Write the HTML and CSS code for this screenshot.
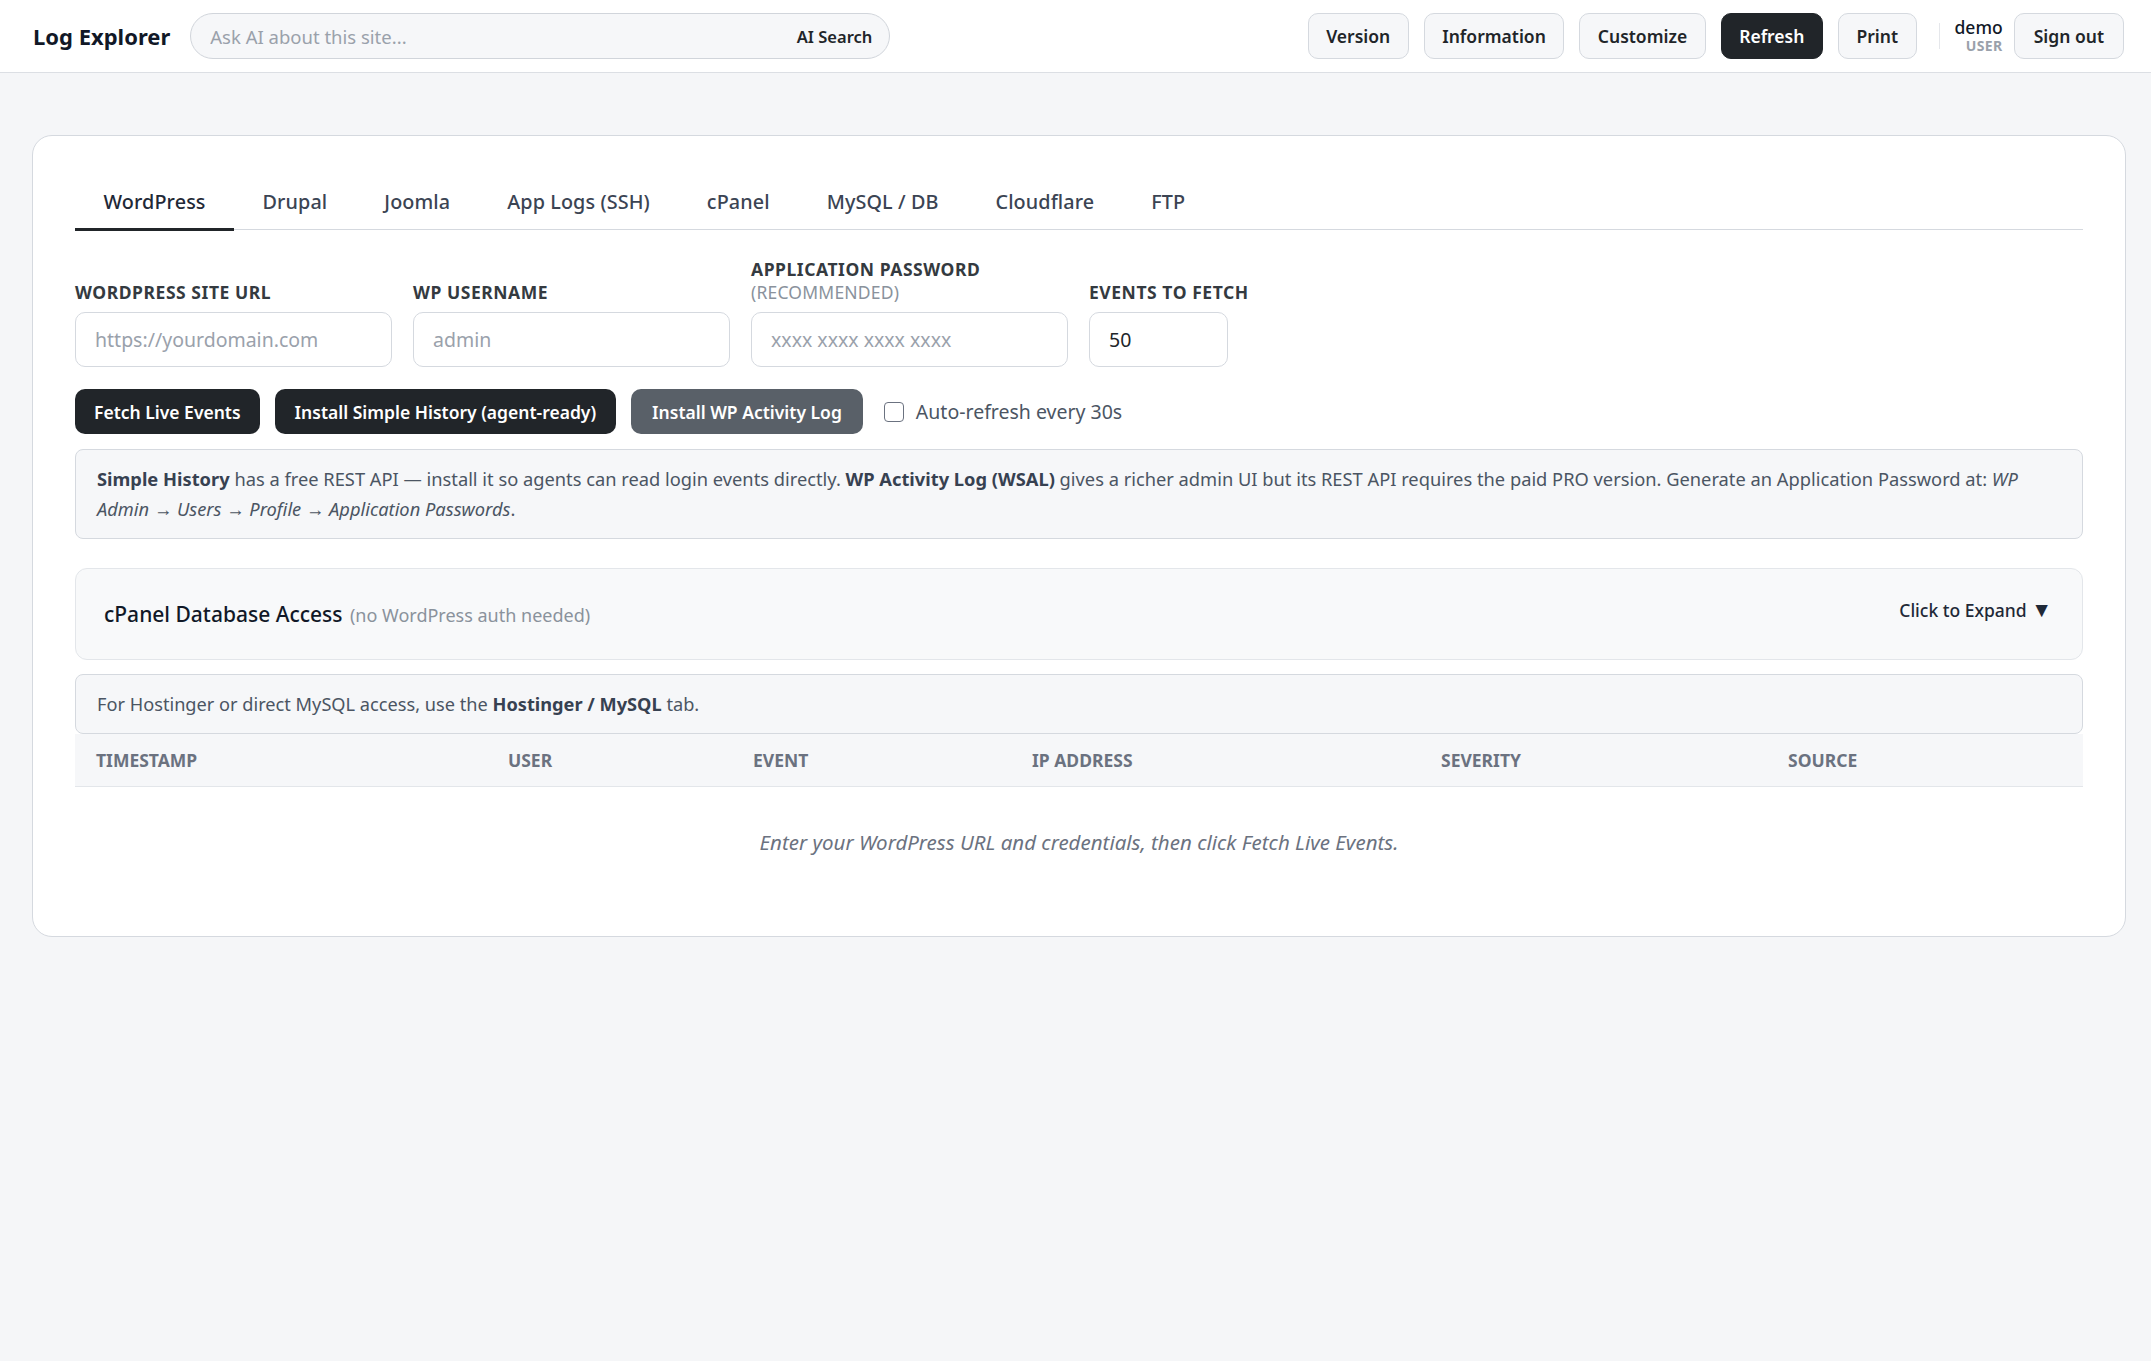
FILE: index.html
```html
<!DOCTYPE html>
<html lang="en">
<head>
<meta charset="utf-8">
<title>Log Explorer</title>
<link rel="stylesheet" href="styles.css">
</head>
<body>
<header class="topbar">
  <div class="brand">Log Explorer</div>
  <div class="search">
    <input class="search-input" type="text" placeholder="Ask AI about this site...">
    <button class="search-btn">AI Search</button>
  </div>
  <nav class="top-actions">
    <button class="btn-light">Version</button>
    <button class="btn-light">Information</button>
    <button class="btn-light">Customize</button>
    <button class="btn-dark">Refresh</button>
    <button class="btn-light">Print</button>
    <span class="divider"></span>
    <div class="user">
      <div class="user-name">demo</div>
      <div class="user-role">USER</div>
    </div>
    <button class="btn-light signout">Sign out</button>
  </nav>
</header>

<main class="main">
  <section class="card">
    <div class="tabs">
      <div class="tab active">WordPress</div>
      <div class="tab">Drupal</div>
      <div class="tab">Joomla</div>
      <div class="tab">App Logs (SSH)</div>
      <div class="tab">cPanel</div>
      <div class="tab">MySQL / DB</div>
      <div class="tab">Cloudflare</div>
      <div class="tab">FTP</div>
    </div>

    <div class="form-grid">
      <div class="field">
        <label class="label" for="wp-url">WORDPRESS SITE URL</label>
        <input class="input" id="wp-url" type="text" placeholder="https://yourdomain.com">
      </div>
      <div class="field">
        <label class="label" for="wp-user">WP USERNAME</label>
        <input class="input" id="wp-user" type="text" placeholder="admin">
      </div>
      <div class="field">
        <label class="label" for="wp-pass">APPLICATION PASSWORD <span class="label-note">(RECOMMENDED)</span></label>
        <input class="input" id="wp-pass" type="text" placeholder="xxxx xxxx xxxx xxxx">
      </div>
      <div class="field">
        <label class="label" for="wp-count">EVENTS TO FETCH</label>
        <input class="input" id="wp-count" type="text" value="50">
      </div>
    </div>

    <div class="actions">
      <button class="btn-solid">Fetch Live Events</button>
      <button class="btn-solid btn-wide">Install Simple History (agent-ready)</button>
      <button class="btn-solid btn-gray">Install WP Activity Log</button>
      <div class="check">
        <input class="checkbox" id="auto" type="checkbox">
        <label for="auto">Auto-refresh every 30s</label>
      </div>
    </div>

    <div class="note"><strong>Simple History</strong> has a free REST API — install it so agents can read login events directly. <strong>WP Activity Log (WSAL)</strong> gives a richer admin UI but its REST API requires the paid PRO version. Generate an Application Password at: <em>WP</em><br><em>Admin → Users → Profile → Application Passwords</em>.</div>

    <div class="collapse">
      <div class="collapse-title">cPanel Database Access <span class="collapse-sub">(no WordPress auth needed)</span></div>
      <div class="collapse-toggle">Click to Expand <span class="caret">▼</span></div>
    </div>

    <div class="hint">For Hostinger or direct MySQL access, use the&nbsp;<strong>Hostinger / MySQL</strong>&nbsp;tab.</div>

    <table class="log-table">
      <colgroup>
        <col class="c1"><col class="c2"><col class="c3"><col class="c4"><col class="c5"><col class="c6">
      </colgroup>
      <thead>
        <tr>
          <th>Timestamp</th>
          <th>User</th>
          <th>Event</th>
          <th>IP Address</th>
          <th>Severity</th>
          <th>Source</th>
        </tr>
      </thead>
      <tbody>
        <tr>
          <td class="empty" colspan="6">Enter your WordPress URL and credentials, then click Fetch Live Events.</td>
        </tr>
      </tbody>
    </table>
  </section>
</main>
</body>
</html>
```

FILE: styles.css
```css
* { box-sizing: border-box; }

html, body {
  margin: 0;
  padding: 0;
}

body {
  background: #f5f6f8;
  font-family: "Noto Sans", "Open Sans", sans-serif;
  color: #212529;
  font-size: 17.5px;
}

button, input {
  font-family: inherit;
}

/* Header */
.topbar {
  height: 73px;
  background: #ffffff;
  border-bottom: 1px solid #dcdfe4;
  display: flex;
  align-items: center;
  padding: 0 27px 0 33px;
}

.brand {
  font-size: 22px;
  font-weight: 700;
  color: #111827;
  margin-right: 20px;
  white-space: nowrap;
}

.search {
  width: 700px;
  height: 46px;
  border: 1px solid #d1d5db;
  border-radius: 23px;
  background: #f6f7f9;
  display: flex;
  align-items: center;
  padding: 0 17px 0 19px;
}

.search-input {
  flex: 1;
  border: 0;
  background: transparent;
  font-size: 18.5px;
  color: #212529;
  outline: none;
  padding: 0;
}

.search-input::placeholder { color: #9aa1ab; }

.search-btn {
  border: 0;
  background: transparent;
  font-size: 16.5px;
  font-weight: 600;
  color: #212529;
  padding: 0;
}

.top-actions {
  margin-left: auto;
  display: flex;
  align-items: center;
  gap: 15px;
}

.btn-light, .btn-dark {
  height: 46px;
  padding: 0 17.5px;
  border-radius: 10px;
  font-size: 17.5px;
  font-weight: 600;
  border: 1px solid #d5d9df;
  background: #f6f7f9;
  color: #212529;
}

.btn-dark {
  background: #212529;
  border-color: #212529;
  color: #ffffff;
}

.divider {
  width: 1px;
  height: 26px;
  background: #e5e7eb;
  margin: 0 0 0 7px;
}

.user {
  text-align: right;
  line-height: 1.12;
}

.user-name {
  font-size: 17.5px;
  font-weight: 500;
  color: #111827;
}

.user-role {
  font-size: 14px;
  font-weight: 700;
  color: #9aa1ab;
  letter-spacing: 0.4px;
}

.signout {
  margin-left: -4px;
  padding: 0 19px;
}

/* Main */
.main {
  padding: 62px 25px 40px 32px;
}

.card {
  background: #ffffff;
  border: 1px solid #d5d9df;
  border-radius: 20px;
  padding: 38px 42px 41px 42px;
}

.tabs {
  display: flex;
  border-bottom: 1px solid #d5d9df;
}

.tab {
  padding: 14px 28.5px 13px;
  font-size: 19.8px;
  line-height: 27px;
  font-weight: 500;
  letter-spacing: 0.1px;
  color: #3b4453;
  border-bottom: 3px solid transparent;
  margin-bottom: -2px;
}

.tab.active {
  color: #1f2937;
  border-bottom-color: #212529;
}

/* Form */
.form-grid {
  margin-top: 28px;
  display: grid;
  grid-template-columns: 317px 317px 317px 139px;
  column-gap: 21px;
  align-items: end;
}

.field {
  display: flex;
  flex-direction: column;
}

.label {
  font-size: 17.5px;
  font-weight: 700;
  letter-spacing: 0.55px;
  line-height: 23px;
  color: #343a40;
  margin-bottom: 8px;
  white-space: nowrap;
}

.label-note {
  display: block;
  font-weight: 400;
  color: #8a929c;
  letter-spacing: 0.2px;
}

.input {
  height: 55px;
  border: 1px solid #d5d9df;
  border-radius: 10px;
  padding: 0 19px;
  font-size: 19.5px;
  color: #212529;
  background: #ffffff;
  outline: none;
}

.input::placeholder { color: #9aa1ab; }

.actions {
  margin-top: 22px;
  display: flex;
  align-items: center;
  gap: 15px;
}

.btn-solid {
  height: 45px;
  padding: 0 19px;
  border-radius: 10px;
  border: 0;
  background: #212529;
  color: #ffffff;
  font-size: 17.5px;
  font-weight: 600;
}

.btn-wide { padding: 0 20px; }

.btn-gray {
  background: #596068;
  padding: 0 21px;
}

.check {
  display: flex;
  align-items: center;
  gap: 12px;
  margin-left: 6px;
  font-size: 19.5px;
  color: #4b5563;
}

.checkbox {
  appearance: none;
  -webkit-appearance: none;
  width: 20px;
  height: 20px;
  margin: 0;
  border: 1.5px solid #6b7280;
  border-radius: 4px;
  background: #ffffff;
}

/* Note */
.note {
  margin-top: 15px;
  background: #f6f7f9;
  border: 1px solid #d5d9df;
  border-radius: 8px;
  padding: 14px 21px;
  font-size: 18.3px;
  line-height: 30px;
  color: #4b5563;
}

.note strong {
  color: #374151;
  font-weight: 700;
}

/* Collapse */
.collapse {
  margin-top: 29px;
  background: #f8f9fa;
  border: 1px solid #e3e6ea;
  border-radius: 12px;
  padding: 29px 30px 28px 28px;
  display: flex;
  justify-content: space-between;
  align-items: flex-start;
}

.collapse-title {
  font-size: 21px;
  line-height: 32px;
  font-weight: 500;
  color: #111827;
}

.collapse-sub {
  font-size: 18px;
  font-weight: 400;
  color: #8a929c;
  margin-left: 2px;
}

.collapse-toggle {
  font-size: 17.5px;
  line-height: 24px;
  font-weight: 500;
  color: #1f2937;
}

.caret {
  font-size: 21px;
  line-height: 20px;
}

/* Hint */
.hint {
  margin-top: 14px;
  height: 60px;
  background: #f6f7f9;
  border: 1px solid #d5d9df;
  border-radius: 8px;
  padding: 0 21px;
  display: flex;
  align-items: center;
  font-size: 18.2px;
  color: #4b5563;
  white-space: nowrap;
}

.hint strong {
  color: #374151;
  font-weight: 700;
}

/* Table */
.log-table {
  width: 100%;
  border-collapse: collapse;
  table-layout: fixed;
}

.c1 { width: 412px; }
.c2 { width: 245px; }
.c3 { width: 279px; }
.c4 { width: 409px; }
.c5 { width: 347px; }
.c6 { width: 316px; }

.log-table th {
  background: #f6f7f9;
  height: 52px;
  padding: 0 21px;
  text-align: left;
  font-size: 17.5px;
  font-weight: 700;
  text-transform: uppercase;
  color: #6b7280;
  border-bottom: 1px solid #e3e6ea;
}

.log-table td.empty {
  padding: 42px 21px 39px;
  line-height: 27px;
  text-align: center;
  font-style: italic;
  font-size: 20.5px;
  color: #6b7280;
}
```
